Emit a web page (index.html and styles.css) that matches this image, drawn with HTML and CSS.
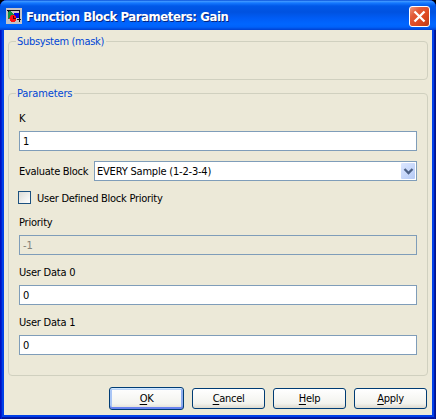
FILE: index.html
```html
<!DOCTYPE html>
<html lang="en">
<head>
<meta charset="utf-8">
<title>Function Block Parameters: Gain</title>
<link rel="stylesheet" href="styles.css">
</head>
<body>
<div class="window">
  <header class="titlebar">
    <svg class="app-icon" width="16" height="16" viewBox="0 0 16 16" shape-rendering="crispEdges">
      <path fill="#c6c3c6" d="M0 0h16v16H0z"/>
      <path fill="#0000e8" d="M8 5h5v5H8z"/>
      <path fill="#109040" d="M2 3h2l5 4-5 4H2z"/>
      <path fill="none" stroke="#101018" d="M1 2.500h12.500V14M11 11.500h4M2.500 2v2"/>
      <circle cx="7" cy="10.500" r="3.500" fill="#ff1010"/>
      <path fill="none" stroke="#500010" d="M7.500 8v2.500H10"/>
    </svg>
    <h1 class="title">Function Block Parameters: Gain</h1>
    <button class="close" aria-label="Close">
      <svg width="19" height="19" viewBox="0 0 19 19"><path d="M4.500 4.500l10 10M14.500 4.500l-10 10" stroke="#fff" stroke-width="2.300"/></svg>
    </button>
  </header>
  <main class="content">
    <section class="group group-mask">
      <h2 class="legend t-mask">Subsystem (mask)</h2>
    </section>
    <section class="group group-params">
      <h2 class="legend t-params">Parameters</h2>
      <label class="label">K</label>
      <div class="input">1</div>
      <div class="select-row">
        <label class="t-eval">Evaluate Block</label>
        <div class="input select"><span class="t-every">EVERY Sample (1-2-3-4)</span>
          <span class="arrow"><svg width="14" height="16" viewBox="0 0 14 16"><path d="M3.500 6L7.500 10l4-4" fill="none" stroke="#4d6185" stroke-width="2.300"/></svg></span>
        </div>
      </div>
      <div class="check-row"><span class="checkbox"></span><label class="t-defined">User Defined Block Priority</label></div>
      <label class="label">Priority</label>
      <div class="input disabled">-1</div>
      <label class="label label-data">User Data 0</label>
      <div class="input">0</div>
      <label class="label label-data">User Data 1</label>
      <div class="input">0</div>
    </section>
    <footer class="actions">
      <button class="btn primary"><u>O</u>K</button>
      <button class="btn"><u>C</u>ancel</button>
      <button class="btn"><u>H</u>elp</button>
      <button class="btn"><u>A</u>pply</button>
    </footer>
  </main>
</div>
</body>
</html>
```
FILE: styles.css
```css
* { box-sizing: border-box; }
body {
  margin: 0;
  background: #000;
  font: 11px/14px "DejaVu Sans Condensed", "DejaVu Sans", sans-serif;
  font-stretch: condensed;
  color: #000;
}
.window {
  width: 436px;
  height: 419px;
  padding: 0 4px 4px;
  border-radius: 7px 7px 0 0;
  overflow: hidden;
  background: #0040e8;
  box-shadow: inset 1px 0 #0010c0, inset 2px 0 #0020d0, inset -1px 0 #00138c, inset -2px 0 #001aa8, inset 0 -1px #00138c, inset 0 -2px #0018b0;
}
.titlebar {
  display: flex;
  align-items: flex-start;
  height: 30px;
  margin: 0 -4px;
  padding: 6px 6px 0;
  background: linear-gradient(#0a50d8 0, #3a94ff 1.500px, #1478ff 3px, #0058e8 6px, #0052e0 12px, #005cf5 18px, #0066ff 24px, #0062fa 27px, #0040d0 30px);
}
.app-icon { margin-top: 2px; flex: none; }
.title {
  flex: 1;
  margin: 2px 0 0 4px;
  color: #fff;
  font: bold 13px/18px "DejaVu Sans Condensed", "DejaVu Sans", sans-serif;
  font-stretch: condensed;
  letter-spacing: -0.420px;
  text-shadow: 1px 1px #06267f;
  white-space: nowrap;
}
.close {
  width: 21px;
  height: 21px;
  padding: 0;
  border: 1px solid #fff;
  border-radius: 3px;
  background: linear-gradient(135deg, #ee9880 0, #e25a38 30%, #dd4820 65%, #b93a18 100%);
}
.close svg { display: block; }
.content {
  height: 385px;
  padding: 11px 4px 0;
  background: #ece9d8;
}
.group {
  border: 1px solid #d0d0bf;
  border-radius: 4px;
}
.group-mask { height: 39px; }
.group-params { height: 283px; margin-top: 13px; padding: 0 10px; }
.legend {
  width: max-content;
  margin: -7px 0 -1px 7px;
  padding: 0 2px 0 1px;
  background: #ece9d8;
  color: #0046d5;
  font: inherit;
}
.group-params .legend { margin-left: -3px; }
.t-mask { letter-spacing: -0.320px; }
.t-params { letter-spacing: -0.120px; }
.t-eval { letter-spacing: -0.280px; margin-top: 1px; }
.t-every { letter-spacing: -0.200px; padding-left: 1px; }
.t-defined { letter-spacing: -0.260px; margin-top: 2px; }
.label { display: block; margin: 12px 0 5px; letter-spacing: -0.220px; }
.input {
  height: 20px;
  padding: 3px;
  border: 1px solid #7f9db9;
  background: #fff;
  line-height: 14px;
}
.disabled { background: #ece9d8; color: #838177; }
.select-row { display: flex; align-items: center; justify-content: space-between; margin-top: 10px; }
.select { display: flex; width: 323px; padding: 1px; justify-content: space-between; line-height: 18px; }
.arrow { width: 14px; height: 16px; border-radius: 1px; background: linear-gradient(135deg, #dce7ff, #b5caf5); }
.arrow svg { display: block; }
.check-row { display: flex; gap: 6px; align-items: center; margin: 10px 0 0 -1px; height: 13px; }
.checkbox { width: 13px; height: 13px; border: 1px solid #1c5180; background: linear-gradient(135deg, #dcdcd7, #fff); }
.label-data { margin: 11px 0 5px; }
.actions { display: flex; justify-content: flex-end; align-items: center; gap: 8px; margin-top: 11px; padding-right: 1px; height: 23px; }
.btn {
  width: 73px;
  height: 21px;
  padding: 1px 0 0;
  border: 1px solid #003c74;
  border-radius: 3px;
  background: linear-gradient(#fff, #f3f3ee 75%, #dedace);
  font: inherit;
  line-height: 18px;
  letter-spacing: -0.300px;
}
.primary { width: 75px; height: 23px; box-shadow: inset 0 1px #cee7ff, inset 0 -2px #6982ee, inset 2px 0 #a9c5f5, inset -2px 0 #8eacef, inset 0 2px #bcd4f6; line-height: 20px; }
u { text-underline-offset: 2px; text-decoration-thickness: 1px; text-decoration-skip-ink: none; }
```
